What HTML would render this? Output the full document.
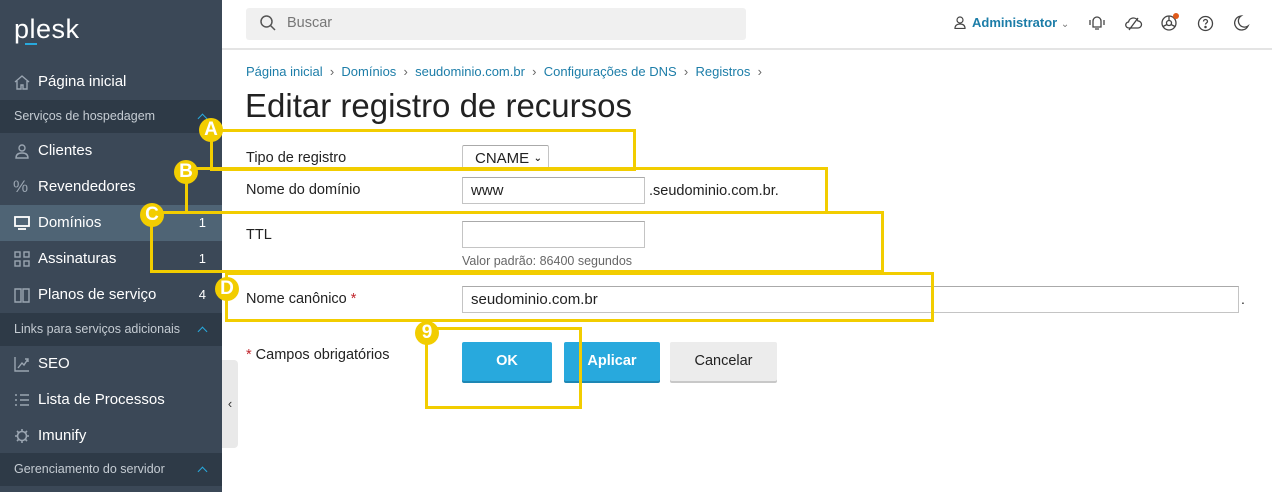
<!DOCTYPE html>
<html><head><meta charset="utf-8"><style>
*{box-sizing:border-box;margin:0;padding:0}
body{width:1272px;height:492px;overflow:hidden;font-family:"Liberation Sans","DejaVu Sans",sans-serif;background:#fff;position:relative;color:#222}
.sb{position:absolute;left:0;top:0;width:222px;height:492px;background:#3b4857}
.abs{position:absolute}
.item{position:absolute;left:0;width:222px;height:36px;color:#fff;font-size:15px;line-height:36px;padding-left:38px}
.sec{position:absolute;left:0;width:222px;height:33px;background:#2e3a47;color:#c5ccd3;font-size:12.5px;line-height:33px;padding-left:14px}
.sec:after{content:"";position:absolute;right:16px;top:15px;width:6px;height:6px;border-left:1.5px solid #28a9dd;border-top:1.5px solid #28a9dd;transform:rotate(45deg)}
.cnt{position:absolute;right:16px;top:0;font-size:13px}
.ic{position:absolute;left:14px;top:10px;width:16px;height:16px}
.lbl{position:absolute;left:246px;font-size:14.5px;color:#222}
.inp{position:absolute;border:1px solid #c4c4c4;background:#fff;border-top-color:#aaa;font-size:15px;padding-left:8px;display:flex;align-items:center}
.y{position:absolute;border:3px solid #f2cd00}
.c{position:absolute;width:24px;height:24px;border-radius:50%;background:#f2cd00;color:#fff;font-weight:bold;font-size:19px;line-height:24px;text-align:center}
.btn{position:absolute;top:342px;height:39px;font-size:14.5px;font-weight:bold;line-height:38px;text-align:center;border-radius:2px}
.bc{position:absolute;font-size:13px;top:64px;color:#1c7da8}
</style></head><body>
<div class="sb">
<div class="abs" style="left:14px;top:14px;color:#fff;font-size:27px;letter-spacing:0.5px">plesk</div>
<div class="abs" style="left:25px;top:43px;width:12px;height:2px;background:#28a9dd"></div>
<div class="item" style="top:64px"><svg class="ic" viewBox="0 0 16 16" fill="none" stroke="#9aa5b1" stroke-width="1.4"><path d="M1 8L8 2l7 6M3 7v8h4v-4h2v4h4V7"/></svg>Página inicial</div>
<div class="sec" style="top:100px">Serviços de hospedagem</div>
<div class="item" style="top:133px"><svg class="ic" viewBox="0 0 16 16" fill="none" stroke="#9aa5b1" stroke-width="1.4"><circle cx="8" cy="5" r="3"/><path d="M2 15c0-4 3-5 6-5s6 1 6 5z"/></svg>Clientes</div>
<div class="item" style="top:169px"><span class="abs" style="left:13px;top:0;color:#9aa5b1;font-size:17px">%</span>Revendedores</div>
<div class="item" style="top:205px;background:#4f6475"><svg class="ic" viewBox="0 0 16 16" fill="none" stroke="#fff" stroke-width="1.8"><rect x="1" y="2" width="14" height="9"/><path d="M4 14h8"/></svg>Domínios<span class="cnt">1</span></div>
<div class="item" style="top:241px"><svg class="ic" viewBox="0 0 16 16" fill="none" stroke="#9aa5b1" stroke-width="1.4"><rect x="1" y="1" width="5" height="5"/><rect x="10" y="1" width="5" height="5"/><rect x="1" y="10" width="5" height="5"/><rect x="10" y="10" width="5" height="5"/></svg>Assinaturas<span class="cnt">1</span></div>
<div class="item" style="top:277px"><svg class="ic" viewBox="0 0 16 16" fill="none" stroke="#9aa5b1" stroke-width="1.4"><path d="M1 2h6v13H1zM9 2h6v13H9z"/></svg>Planos de serviço<span class="cnt">4</span></div>
<div class="sec" style="top:313px">Links para serviços adicionais</div>
<div class="item" style="top:346px"><svg class="ic" viewBox="0 0 16 16" fill="none" stroke="#9aa5b1" stroke-width="1.4"><path d="M1 1v14h14M4 12l4-5 2 2 4-6M11 3h3v3"/></svg>SEO</div>
<div class="item" style="top:382px"><svg class="ic" viewBox="0 0 16 16" fill="none" stroke="#9aa5b1" stroke-width="1.4"><path d="M1 3h2M1 8h2M1 13h2M6 3h9M6 8h9M6 13h9"/></svg>Lista de Processos</div>
<div class="item" style="top:418px"><svg class="ic" viewBox="0 0 16 16" fill="none" stroke="#9aa5b1" stroke-width="1.6"><circle cx="8" cy="8" r="4.5"/><path d="M8 1v2M8 13v2M1 8h2M13 8h2M3 3l1.5 1.5M11.5 11.5L13 13M3 13l1.5-1.5M11.5 4.5L13 3"/></svg>Imunify</div>
<div class="sec" style="top:453px">Gerenciamento do servidor</div>
</div>
<div class="abs" style="left:222px;top:360px;width:16px;height:88px;background:#e9e9e9;border-radius:0 4px 4px 0;color:#333;font-size:13px;line-height:88px;text-align:center">‹</div>
<div class="abs" style="left:222px;top:48px;width:1050px;height:2px;background:#e4e4e4"></div>
<div class="abs" style="left:246px;top:8px;width:500px;height:32px;background:#f0f0f0;border-radius:3px"></div>
<svg class="abs" style="left:259px;top:14px" width="18" height="18" viewBox="0 0 18 18" fill="none" stroke="#555" stroke-width="1.5"><circle cx="7.5" cy="7.5" r="5.5"/><path d="M11.5 11.5L16 16"/></svg>
<div class="abs" style="left:287px;top:15px;font-size:14.5px;color:#777">Buscar</div>
<svg class="abs" style="left:954px;top:16px" width="12" height="13" viewBox="0 0 12 13" fill="none" stroke="#444" stroke-width="1.2"><circle cx="6" cy="4" r="3"/><path d="M1 12.5c0-3 2-4.5 5-4.5s5 1.5 5 4.5z"/></svg>
<div class="abs" style="left:972px;top:15px;font-size:13px;font-weight:bold;color:#1c7da8">Administrator <span style="color:#777;font-weight:normal;font-size:10px">⌄</span></div>
<svg class="abs" style="left:1088px;top:14px" width="18" height="18" viewBox="0 0 18 18" fill="none" stroke="#444" stroke-width="1.3"><path d="M5 13V7a4 4 0 018 0v6zM7 15h4M2 6v5M16 6v5"/></svg>
<svg class="abs" style="left:1124px;top:14px" width="19" height="18" viewBox="0 0 19 18" fill="none" stroke="#444" stroke-width="1.3"><path d="M5 14h9a3.5 3.5 0 000-7 5 5 0 00-9.5 1A3 3 0 005 14zM5 16L14 4"/></svg>
<svg class="abs" style="left:1160px;top:14px" width="18" height="18" viewBox="0 0 18 18" fill="none" stroke="#444" stroke-width="1.3"><circle cx="9" cy="9" r="7"/><circle cx="9" cy="9" r="2.5"/><path d="M9 2v4.5M3 12.5l4-2M15 12.5l-4-2"/></svg>
<div class="abs" style="left:1173px;top:13px;width:6px;height:6px;border-radius:50%;background:#e05a1a"></div>
<svg class="abs" style="left:1197px;top:15px" width="17" height="17" viewBox="0 0 17 17" fill="none" stroke="#444" stroke-width="1.3"><circle cx="8.5" cy="8.5" r="7"/><path d="M6.5 6.5a2 2 0 114 0c0 1.3-2 1.5-2 3"/><circle cx="8.5" cy="12" r=".6" fill="#444"/></svg>
<svg class="abs" style="left:1234px;top:15px" width="16" height="17" viewBox="0 0 16 17" fill="none" stroke="#444" stroke-width="1.3"><path d="M7 1a7 7 0 107 10A6 6 0 017 1z"/></svg>
<div class="bc" style="left:246px">Página inicial &nbsp;<span style="color:#666">›</span>&nbsp; Domínios &nbsp;<span style="color:#666">›</span>&nbsp; seudominio.com.br &nbsp;<span style="color:#666">›</span>&nbsp; Configurações de DNS &nbsp;<span style="color:#666">›</span>&nbsp; Registros &nbsp;<span style="color:#666">›</span></div>
<div class="abs" style="left:245px;top:87px;font-size:33px;color:#222">Editar registro de recursos</div>
<div class="lbl" style="top:150px">Tipo de registro</div>
<div class="inp" style="left:462px;top:145px;width:87px;height:26px;border-radius:2px;padding-left:12px">CNAME <span style="font-size:10px;position:absolute;right:6px;font-weight:bold">⌄</span></div>
<div class="lbl" style="top:182px">Nome do domínio</div>
<div class="inp" style="left:462px;top:177px;width:183px;height:27px">www</div>
<div class="abs" style="left:649px;top:183px;font-size:14.5px">.seudominio.com.br.</div>
<div class="lbl" style="top:227px">TTL</div>
<div class="inp" style="left:462px;top:221px;width:183px;height:27px"></div>
<div class="abs" style="left:462px;top:254px;font-size:12.5px;color:#666">Valor padrão: 86400 segundos</div>
<div class="lbl" style="top:291px">Nome canônico <span style="color:#c0262d">*</span></div>
<div class="inp" style="left:462px;top:286px;width:777px;height:27px">seudominio.com.br</div>
<div class="abs" style="left:1241px;top:291px;font-size:14px">.</div>
<div class="lbl" style="top:347px"><span style="color:#c0262d">*</span> Campos obrigatórios</div>
<div class="btn" style="left:462px;width:90px;background:#28a9dd;color:#fff;box-shadow:0 2px 0 #1e87b4">OK</div>
<div class="btn" style="left:564px;width:96px;background:#28a9dd;color:#fff;box-shadow:0 2px 0 #1e87b4">Aplicar</div>
<div class="btn" style="left:670px;width:107px;background:#ececec;color:#222;font-weight:normal;box-shadow:0 2px 0 #c8c8c8">Cancelar</div>
<div class="y" style="left:210px;top:129px;width:426px;height:42px"></div>
<div class="y" style="left:185px;top:167px;width:643px;height:47px"></div>
<div class="y" style="left:150px;top:211px;width:734px;height:62px"></div>
<div class="y" style="left:225px;top:272px;width:709px;height:50px"></div>
<div class="y" style="left:425px;top:327px;width:157px;height:82px"></div>
<div class="c" style="left:199px;top:118px">A</div>
<div class="c" style="left:174px;top:160px">B</div>
<div class="c" style="left:140px;top:203px">C</div>
<div class="c" style="left:215px;top:277px">D</div>
<div class="c" style="left:415px;top:321px">9</div>
</body></html>
